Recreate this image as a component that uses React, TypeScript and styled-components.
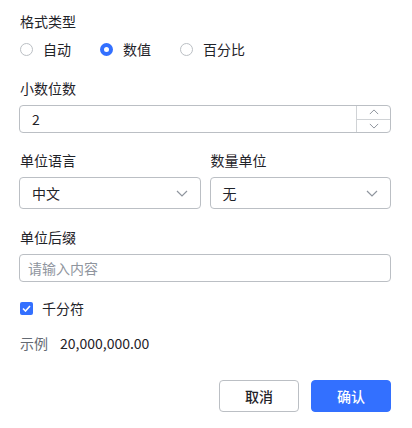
import React from 'react';
import styled, {createGlobalStyle} from 'styled-components';

const GlobalStyle = createGlobalStyle`
  body {
    margin: 0;
    background: #ffffff;
    font-family: "Noto Sans CJK SC", "Noto Sans", sans-serif;
    color: #1f2329;
  }
`

const Panel = styled.div`
  width: 412px;
  height: 428px;
  box-sizing: border-box;
  padding: 10px 21px 0 19px;
  display: flex;
  flex-direction: column;
`

const Field = styled.div<{ gapTop?: number }>`
  display: flex;
  flex-direction: column;
  gap: 6px;
  margin-top: ${(p) => p.gapTop ?? 0}px;
`

const Label = styled.div`
  font-size: 14px;
  line-height: 22px;
  padding-left: 1px;
  color: #1f2329;
`

const RadioRow = styled.div`
  display: flex;
  align-items: center;
  height: 22px;
`

const RadioItem = styled.label`
  display: flex;
  align-items: center;
  gap: 10px;
  font-size: 14px;
  line-height: 22px;
  margin-right: 28px;
  padding-left: 1px;
`

const RadioDot = styled.span<{ checked?: boolean }>`
  width: 13px;
  height: 13px;
  border-radius: 50%;
  box-sizing: border-box;
  border: ${(p) => (p.checked ? '4px solid #3370ff' : '1px solid #bbbfc4')};
  background: #fff;
`

const TextBox = styled.div`
  height: 28px;
  box-sizing: border-box;
  border: 1px solid #bbbfc4;
  border-radius: 4px;
  display: flex;
  align-items: center;
  font-size: 14px;
`

const Value = styled.span<{ pad?: number }>`
  flex: 1;
  padding-left: ${(p) => p.pad ?? 12}px;
  color: #1f2329;
`

const Placeholder = styled.span`
  flex: 1;
  padding-left: 8px;
  color: #8f959e;
`

const Stepper = styled.div`
  width: 33px;
  height: 100%;
  border-left: 1px solid #d0d3d6;
  display: flex;
  flex-direction: column;
`

const StepBtn = styled.div<{ top?: boolean }>`
  flex: 1;
  display: flex;
  align-items: center;
  justify-content: center;
  border-bottom: ${(p) => (p.top ? '1px solid #d0d3d6' : 'none')};
`

const SelectGrid = styled.div`
  display: grid;
  grid-template-columns: 1fr 1fr;
  column-gap: 9px;
`

const SelectBox = styled(TextBox)`
  height: 32px;
  padding-right: 12px;
`

const CheckRow = styled.label`
  display: flex;
  align-items: center;
  gap: 9px;
  font-size: 14px;
  line-height: 22px;
  margin-top: 15px;
  padding-left: 1px;
`

const CheckBox = styled.span`
  width: 13px;
  height: 13px;
  border-radius: 2px;
  background: #3370ff;
  display: flex;
  align-items: center;
  justify-content: center;
`

const ExampleRow = styled.div`
  display: flex;
  align-items: center;
  gap: 12px;
  font-size: 14px;
  line-height: 22px;
  margin-top: 13px;
  padding-left: 1px;
`

const Muted = styled.span`
  color: #646a73;
`

const Footer = styled.div`
  display: flex;
  justify-content: flex-end;
  gap: 12px;
  margin-top: 26px;
`

const Button = styled.button<{ primary?: boolean }>`
  width: 80px;
  height: 32px;
  box-sizing: border-box;
  border-radius: 4px;
  font-family: "Noto Sans CJK SC", "Noto Sans", sans-serif;
  font-size: 14px;
  font-weight: 500;
  border: 1px solid ${(p) => (p.primary ? '#3370ff' : '#bbbfc4')};
  background: ${(p) => (p.primary ? '#3370ff' : '#ffffff')};
  color: ${(p) => (p.primary ? '#ffffff' : '#1f2329')};
`

const Chevron = ({w = 12, up = false}: { w?: number; up?: boolean }) => (
    <svg width={w} height={w / 2 + 1} viewBox="0 0 12 7" fill="none">
        <path d={up ? 'M1 6L6 1L11 6' : 'M1 1L6 6L11 1'} stroke="#8f959e" strokeWidth="1.2"/>
    </svg>
)

export default function App() {
    return (
        <>
            <GlobalStyle/>
            <Panel>
                <Field>
                    <Label>格式类型</Label>
                    <RadioRow>
                        <RadioItem><RadioDot/>自动</RadioItem>
                        <RadioItem><RadioDot checked/>数值</RadioItem>
                        <RadioItem><RadioDot/>百分比</RadioItem>
                    </RadioRow>
                </Field>

                <Field gapTop={17}>
                    <Label>小数位数</Label>
                    <TextBox>
                        <Value>2</Value>
                        <Stepper>
                            <StepBtn top><Chevron w={10} up/></StepBtn>
                            <StepBtn><Chevron w={10}/></StepBtn>
                        </Stepper>
                    </TextBox>
                </Field>

                <SelectGrid style={{marginTop: 16}}>
                    <Field>
                        <Label>单位语言</Label>
                        <SelectBox>
                            <Value>中文</Value>
                            <Chevron/>
                        </SelectBox>
                    </Field>
                    <Field>
                        <Label>数量单位</Label>
                        <SelectBox>
                            <Value>无</Value>
                            <Chevron/>
                        </SelectBox>
                    </Field>
                </SelectGrid>

                <Field gapTop={17}>
                    <Label>单位后缀</Label>
                    <TextBox>
                        <Placeholder>请输入内容</Placeholder>
                    </TextBox>
                </Field>

                <CheckRow>
                    <CheckBox>
                        <svg width="9" height="7" viewBox="0 0 9 7" fill="none">
                            <path d="M1 3.5L3.5 6L8 1" stroke="#fff" strokeWidth="1.6"/>
                        </svg>
                    </CheckBox>
                    千分符
                </CheckRow>

                <ExampleRow>
                    <Muted>示例</Muted>
                    <span>20,000,000.00</span>
                </ExampleRow>

                <Footer>
                    <Button>取消</Button>
                    <Button primary>确认</Button>
                </Footer>
            </Panel>
        </>
    );
}
